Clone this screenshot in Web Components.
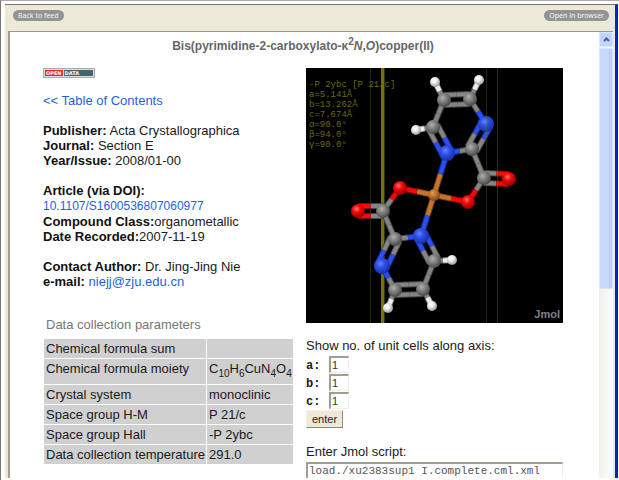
<!DOCTYPE html>
<html lang="en">
<head>
<meta charset="utf-8">
<title>Crystal structure report</title>
<style>
    html, body {
        margin: 0;
        height: 100%;
        overflow: hidden;
        background: #fff;
        font-family: "Liberation Sans", Arial, sans-serif;
        font-size: 13px;
        line-height: 15px;
        color: #1a1a1a;
    }
</style>
</head>
<body>
<reader-window>
    <pill-button slot="left">Back to feed</pill-button>
    <pill-button slot="right">Open in browser</pill-button>
    <structure-report></structure-report>
</reader-window>

<script>
(function () {
    function define(name, html, setup) {
        const template = document.createElement("template");
        template.innerHTML = html;

        customElements.define(name, class extends HTMLElement {
            constructor() {
                super();
                const root = this.attachShadow({ mode: "open" });
                root.appendChild(template.content.cloneNode(true));
                if (setup) {
                    setup(root, this);
                }
            }
        });
    }

    define("pill-button", `
        <style>
            :host {
                display: block;
            }
            button {
                display: block;
                height: 11px;
                padding: 0 5px;
                border: none;
                border-radius: 6px;
                background: #949494;
                color: #f4f4f4;
                font: 7px/11px "Noto Sans", sans-serif;
                cursor: pointer;
            }
        </style>
        <button type="button"><slot></slot></button>
    `);

    define("scroll-track", `
        <style>
            :host {
                display: flex;
                flex-direction: column;
                gap: 1px;
                width: 14px;
                background: linear-gradient(90deg, #f1f0ea, #fefefb);
            }
            button {
                display: grid;
                place-items: center;
                height: 15px;
                padding: 0;
                border: 1px solid #dce6fb;
                border-radius: 2px;
                background: #c3d4fc;
            }
            .thumb {
                height: 54%;
                box-sizing: border-box;
                border: 1px solid #dce6fb;
                border-radius: 2px;
                background: linear-gradient(90deg, #c9d8fc 60%, #b7cbf8);
            }
        </style>
        <button type="button" aria-label="Scroll up">
            <svg width="7" height="5" viewBox="0 0 7 5"><path d="M1 4 3.500 1.500 6 4" fill="none" stroke="#4d6185" stroke-width="2"/></svg>
        </button>
        <div class="thumb"></div>
    `);

    define("reader-window", `
        <style>
            :host {
                display: flex;
                box-sizing: border-box;
                height: 100vh;
                padding: 3px 1px 2px 4px;
                border-top: 1px solid #aaa;
                border-left: 1px solid #777;
            }
            .frame {
                flex: 1;
                min-width: 0;
                display: flex;
                flex-direction: column;
                background: #ece9d8;
                border-top: 1px solid #77746a;
                border-right: 3px solid #0a23c4;
            }
            header {
                display: flex;
                justify-content: space-between;
                height: 26px;
                box-sizing: border-box;
                padding: 5px 6px 0 8px;
            }
            .view {
                flex: 1;
                min-height: 0;
                display: flex;
                margin: 0 2px 0 3px;
                border-top: 1px solid #9b988a;
                border-left: 2px solid #a19e90;
                background: #fff;
            }
            main {
                flex: 1;
                min-width: 0;
                overflow: hidden;
            }
        </style>
        <div class="frame">
            <header>
                <slot name="left"></slot>
                <slot name="right"></slot>
            </header>
            <div class="view">
                <main><slot></slot></main>
                <scroll-track></scroll-track>
            </div>
        </div>
    `);

    define("open-data-badge", `
        <style>
            :host {
                display: flex;
                width: 48px;
                height: 6px;
                gap: 1px;
                padding: 1px;
                border: 1px solid #aaa;
                background: #ddd;
                color: #fff;
                font: bold 5px/6px "DejaVu Sans", sans-serif;
            }
            span {
                padding: 0 1px;
            }
            .open {
                background: #dc2c20;
            }
            .data {
                flex: 1;
                background: #426671;
            }
        </style>
        <span class="open">OPEN</span><span class="data">DATA</span>
    `);

    define("article-info", `
        <style>
            :host {
                display: block;
            }
            p {
                margin: 0 0 15px;
            }
            a {
                color: #1f5fe0;
                text-decoration: none;
            }
            b {
                color: #111;
            }
            .doi {
                font-size: 12px;
            }
        </style>
        <p><a href="#contents">&lt;&lt; Table of Contents</a></p>
        <p>
            <b>Publisher:</b> Acta Crystallographica<br>
            <b>Journal:</b> Section E<br>
            <b>Year/Issue:</b> 2008/01-00
        </p>
        <p>
            <b>Article (via DOI):</b><br>
            <a class="doi" href="#doi">10.1107/S1600536807060977</a><br>
            <b>Compound Class:</b>organometallic<br>
            <b>Date Recorded:</b>2007-11-19
        </p>
        <p>
            <b>Contact Author:</b> Dr. Jing-Jing Nie<br>
            <b>e-mail:</b> <a href="#mail">niejj@zju.edu.cn</a>
        </p>
    `);

    define("data-parameters", `
        <style>
            :host {
                display: block;
            }
            table {
                width: 100%;
                border-spacing: 1px;
            }
            caption {
                padding: 0 3px 6px;
                text-align: left;
                color: #777;
            }
            th, td {
                height: 15px;
                padding: 2px 1px 2px 2px;
                background: #d0d0d0;
                text-align: left;
                vertical-align: top;
                font-weight: normal;
                white-space: nowrap;
            }
            sub {
                font-size: 10px;
                line-height: 16px;
            }
        </style>
        <table>
            <caption>Data collection parameters</caption>
            <tbody>
                <tr><th scope="row">Chemical formula sum</th><td></td></tr>
                <tr><th scope="row">Chemical formula moiety</th><td>C<sub>10</sub>H<sub>6</sub>CuN<sub>4</sub>O<sub>4</sub></td></tr>
                <tr><th scope="row">Crystal system</th><td>monoclinic</td></tr>
                <tr><th scope="row">Space group H-M</th><td>P 21/c</td></tr>
                <tr><th scope="row">Space group Hall</th><td>-P 2ybc</td></tr>
                <tr><th scope="row">Data collection temperature</th><td>291.0</td></tr>
            </tbody>
        </table>
    `);

    // element: [radius, highlight, base, shade]
    const elements = {
        H: [5, "#ffffff", "#eeeeee", "#999999"],
        C: [7, "#b0b0b0", "#858585", "#484848"],
        N: [8, "#6685ff", "#2d4fee", "#172fa0"],
        O: [7, "#ff7777", "#f80808", "#920000"],
        Cu: [6, "#e0a05d", "#c4762c", "#794515"]
    };

    const atoms = [
        ["H", 129, 14], ["H", 173, 12], ["C", 138, 32], ["C", 164, 31],
        ["N", 180, 56], ["C", 166, 81], ["N", 141, 85], ["C", 127, 59],
        ["H", 110, 62], ["C", 178, 110], ["O", 203, 111], ["O", 162, 134],
        ["Cu", 128, 127], ["O", 94, 120], ["C", 77, 143], ["O", 52, 143],
        ["C", 89, 171], ["N", 115, 168], ["N", 76, 198], ["C", 128, 193],
        ["H", 146, 192], ["C", 117, 221], ["C", 89, 222], ["H", 82, 240],
        ["H", 126, 238]
    ];

    // [from, to, order]
    const bonds = [
        [2, 3, 2], [3, 4, 1], [4, 5, 2], [5, 6, 1], [6, 7, 2], [7, 2, 1],
        [2, 0, 1], [3, 1, 1], [7, 8, 1], [5, 9, 1], [9, 10, 2], [9, 11, 1],
        [11, 12, 1], [12, 6, 1], [12, 13, 1], [12, 17, 1], [13, 14, 1],
        [14, 15, 2], [14, 16, 1], [16, 17, 1], [16, 18, 2], [17, 19, 2],
        [19, 20, 1], [19, 21, 1], [21, 22, 2], [22, 18, 1], [22, 23, 1],
        [21, 24, 1]
    ];

    function stick(x1, y1, x2, y2, symbol) {
        const [, , base, shade] = elements[symbol];
        const line = `<line x1="${x1}" y1="${y1}" x2="${x2}" y2="${y2}"`;
        return `${line} stroke="${shade}" stroke-width="6"/>` +
            `${line} stroke="${base}" stroke-width="4"/>`;
    }

    function drawBond([from, to, order]) {
        const [s1, x1, y1] = atoms[from];
        const [s2, x2, y2] = atoms[to];
        const length = Math.hypot(x2 - x1, y2 - y1);
        const nx = -(y2 - y1) / length;
        const ny = (x2 - x1) / length;
        const offsets = order === 2 ? [-5, 5] : [0];

        return offsets.map(d => {
            const ax = x1 + nx * d, ay = y1 + ny * d;
            const bx = x2 + nx * d, by = y2 + ny * d;
            const mx = (ax + bx) / 2, my = (ay + by) / 2;
            return stick(ax, ay, mx, my, s1) + stick(mx, my, bx, by, s2);
        }).join("");
    }

    function drawMolecule() {
        const gradients = Object.entries(elements).map(([name, [, light, base, shade]]) =>
            `<radialGradient id="${name}" cx="0.4" cy="0.35" r="0.65">
                <stop offset="0" stop-color="${light}"/>
                <stop offset="0.4" stop-color="${base}"/>
                <stop offset="1" stop-color="${shade}"/>
            </radialGradient>`).join("");
        const balls = atoms.map(([name, x, y]) =>
            `<circle cx="${x}" cy="${y}" r="${elements[name][0]}" fill="url(#${name})"/>`).join("");

        return `<defs>${gradients}</defs>
            <rect x="64" width="1" height="255" fill="#292500"/>
            <rect x="75" width="3" height="255" fill="#747400"/>
            <rect x="78" width="1" height="255" fill="#333300"/>
            ${bonds.map(drawBond).join("")}
            ${balls}
            <rect x="180" width="1" height="255" fill="#777700" opacity="0.3"/>
            <rect x="191" width="1" height="255" fill="#777700" opacity="0.4"/>`;
    }

    define("molecule-viewer", `
        <style>
            :host {
                display: block;
                position: relative;
                background: #000;
            }
            svg {
                display: block;
                width: 100%;
            }
            pre {
                position: absolute;
                top: 12px;
                left: 3px;
                margin: 0;
                color: #6b6b0a;
                font: 9px/10px "Liberation Mono", monospace;
            }
            .brand {
                position: absolute;
                right: 3px;
                bottom: 2px;
                color: #808080;
                font-size: 11px;
                font-weight: bold;
                line-height: 14px;
            }
        </style>
        <svg viewBox="0 0 257 255" role="img" aria-label="Molecule"></svg>
        <pre>-P 2ybc [P 21/c]
a=5.141Å
b=13.262Å
c=7.674Å
α=90.0°
β=94.0°
γ=90.0°</pre>
        <span class="brand">Jmol</span>
    `, root => {
        root.querySelector("svg").innerHTML = drawMolecule();
    });

    define("cell-form", `
        <style>
            :host {
                display: block;
            }
            form {
                margin: 0;
            }
            p {
                margin: 0 0 3px;
            }
            .row {
                display: flex;
                align-items: center;
                margin-bottom: 1px;
            }
            .row label {
                width: 23px;
                padding-top: 3px;
                box-sizing: border-box;
                font: bold 12px/14px "Liberation Mono", monospace;
            }
            input, textarea {
                box-sizing: border-box;
                border: 1px solid #f0efe8;
                border-top: 2px solid #a09d92;
                border-left: 2px solid #a09d92;
                border-radius: 0;
                background: #fff;
                color: #333;
            }
            input {
                width: 20px;
                height: 17px;
                padding: 0 1px;
                font: 11px/14px "Liberation Sans", sans-serif;
            }
            button {
                display: block;
                height: 18px;
                margin: 1px 0 16px;
                padding: 0 5px;
                border: 1px solid #f4f2e8;
                border-right: 1px solid #8d8a7d;
                border-bottom: 1px solid #8d8a7d;
                background: #ece9d8;
                color: #222;
                font: 11px/14px "Liberation Sans", sans-serif;
            }
            .script {
                display: block;
                margin-bottom: 3px;
            }
            textarea {
                display: block;
                width: 100%;
                height: 60px;
                padding: 0 1px;
                resize: none;
                color: #555;
                font: 11px/14px "Liberation Mono", monospace;
            }
        </style>
        <form>
            <p>Show no. of unit cells along axis:</p>
            <div class="row"><label for="a">a:</label><input id="a" value="1"></div>
            <div class="row"><label for="b">b:</label><input id="b" value="1"></div>
            <div class="row"><label for="c">c:</label><input id="c" value="1"></div>
            <button type="button">enter</button>
            <label class="script" for="script">Enter Jmol script:</label>
            <textarea id="script">load./xu2383sup1 I.complete.cml.xml</textarea>
        </form>
    `);

    define("structure-report", `
        <style>
            :host {
                display: block;
                padding: 6px 36px 0 33px;
            }
            h1 {
                margin: 0 0 14px;
                text-align: center;
                color: #666;
                font-size: 12px;
                line-height: 16px;
            }
            sup {
                font-size: 10px;
                line-height: 1px;
            }
            .columns {
                display: grid;
                grid-template-columns: minmax(0, 249fr) minmax(0, 257fr);
                gap: 14px;
                align-items: start;
            }
            open-data-badge {
                margin-bottom: 15px;
            }
            data-parameters {
                margin-top: 28px;
            }
            cell-form {
                margin-top: 15px;
            }
        </style>
        <h1>Bis(pyrimidine-2-carboxylato-κ<sup>2</sup><i>N</i>,<i>O</i>)copper(II)</h1>
        <div class="columns">
            <section>
                <open-data-badge></open-data-badge>
                <article-info></article-info>
                <data-parameters></data-parameters>
            </section>
            <section>
                <molecule-viewer></molecule-viewer>
                <cell-form></cell-form>
            </section>
        </div>
    `);
})();
</script>
</body>
</html>
